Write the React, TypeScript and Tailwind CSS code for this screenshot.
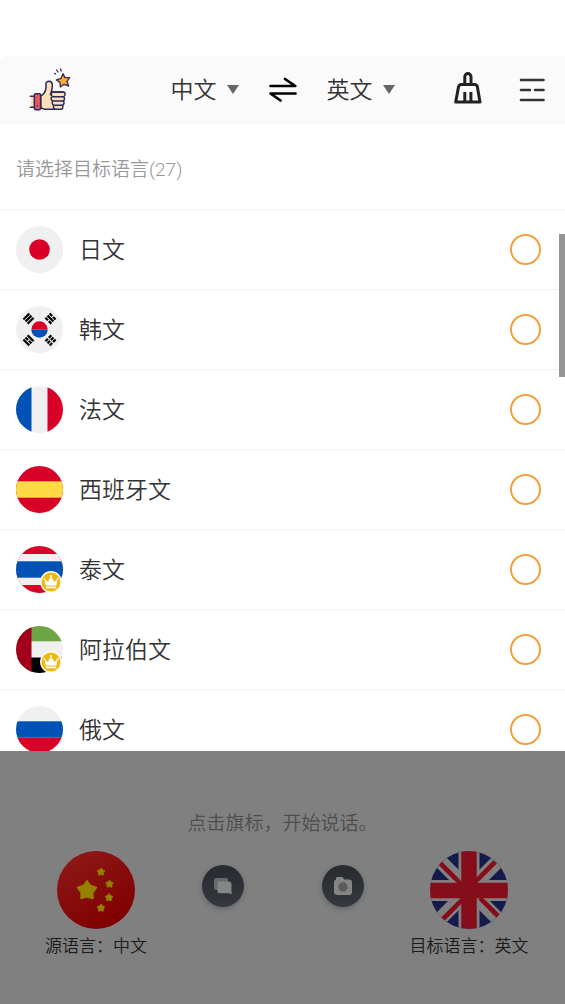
import React, { useState } from 'react';

interface Language {
  id: string;
  name: string;
  vip?: boolean;
  flag: React.ReactNode;
}

const languages: Language[] = [
  {
    id: 'ja',
    name: '日文',
    flag: (
      <>
        <rect width="47" height="47" fill="#f0f0f0" />
        <circle cx="23.5" cy="23.5" r="10.3" fill="#d80027" />
      </>
    ),
  },
  {
    id: 'ko',
    name: '韩文',
    flag: (
      <>
        <rect width="47" height="47" fill="#f0f0f0" />
        <path d="M15.3 23.5a8.2 8.2 0 0 1 16.4 0z" fill="#d80027" />
        <path d="M15.3 23.5a8.2 8.2 0 0 0 16.4 0z" fill="#0052b4" />
        <g stroke="#000" strokeWidth="2.2">
          <path d="M-4.2-3h8.4M-4.2 0h8.4M-4.2 3h8.4" transform="translate(12.5 12.6) rotate(-45)" />
          <path d="M-4.2-3h3.6M.6-3h3.6M-4.2 0h8.4M-4.2 3h3.6M.6 3h3.6" transform="translate(34.5 12.6) rotate(45)" />
          <path d="M-4.2-3h8.4M-4.2 0h3.6M.6 0h3.6M-4.2 3h8.4" transform="translate(12.5 34.4) rotate(45)" />
          <path d="M-4.2-3h3.6M.6-3h3.6M-4.2 0h3.6M.6 0h3.6M-4.2 3h3.6M.6 3h3.6" transform="translate(34.5 34.4) rotate(-45)" />
        </g>
      </>
    ),
  },
  {
    id: 'fr',
    name: '法文',
    flag: (
      <>
        <rect width="47" height="47" fill="#f0f0f0" />
        <rect width="15.5" height="47" fill="#0052b4" />
        <rect x="31.5" width="15.5" height="47" fill="#d80027" />
      </>
    ),
  },
  {
    id: 'es',
    name: '西班牙文',
    flag: (
      <>
        <rect width="47" height="47" fill="#d80027" />
        <rect y="15.3" width="47" height="16.4" fill="#ffda44" />
      </>
    ),
  },
  {
    id: 'th',
    name: '泰文',
    vip: true,
    flag: (
      <>
        <rect width="47" height="47" fill="#d80027" />
        <rect y="8" width="47" height="31" fill="#f0f0f0" />
        <rect y="15.3" width="47" height="16.4" fill="#0052b4" />
      </>
    ),
  },
  {
    id: 'ar',
    name: '阿拉伯文',
    vip: true,
    flag: (
      <>
        <rect width="47" height="47" fill="#f0f0f0" />
        <rect width="47" height="15.3" fill="#6da544" />
        <rect y="31.5" width="47" height="15.5" fill="#000" />
        <rect width="15.5" height="47" fill="#a2001d" />
      </>
    ),
  },
  {
    id: 'ru',
    name: '俄文',
    flag: (
      <>
        <rect width="47" height="47" fill="#f0f0f0" />
        <rect y="15.3" width="47" height="16.4" fill="#0052b4" />
        <rect y="31.7" width="47" height="15.3" fill="#d80027" />
      </>
    ),
  },
];

const CrownBadge = () => (
  <svg viewBox="0 0 22 22" className="absolute right-px bottom-0 h-[22px] w-[22px]" aria-hidden="true">
    <circle cx="11" cy="11" r="10.2" fill="#efb810" stroke="#fffbea" strokeWidth="1.5" />
    <path d="M4.4 8.2l3.4 2.6L11 5.4l3.2 5.4 3.4-2.6-1.3 6.3H5.7z" fill="#fff" />
    <path d="M5.7 16.4h10.6" stroke="#fff" strokeWidth="1.8" />
    <circle cx="11" cy="5.2" r="1.1" fill="#fff" />
    <circle cx="4.3" cy="8" r="1" fill="#fff" />
    <circle cx="17.7" cy="8" r="1" fill="#fff" />
  </svg>
);

const ThumbLogo = () => (
  <svg viewBox="0 0 180 180" className="h-[60px] w-[60px]" strokeLinejoin="round" strokeLinecap="round" aria-hidden="true">
    <path d="M33 109h12v33H33z" fill="#fddcb5" />
    <path d="M31 109h12M31 142h12" stroke="#2b2a5c" strokeWidth="4.5" />
    <path
      d="M62 108c8-4 15-14 16-26V70c0-8 18-9 19 3 1 9-2 17-3 23h36c7 0 7 13 0 14 5 1 5 12-1 13 5 1 4 12-2 13 3 2 2 11-4 12H78c-6 0-9-3-16-4z"
      fill="#fddfba"
      stroke="#2b2a5c"
      strokeWidth="4.5"
    />
    <path d="M130 96H99c-7 0-7 13 0 14h31M96 110c-4 3-4 11 3 13h30M99 123c-4 3-3 11 3 13h25M102 136c-3 3-2 10 3 12M94 96l-3 8" fill="none" stroke="#2b2a5c" strokeWidth="4.5" />
    <rect x="43" y="101" width="19" height="48" rx="4" fill="#e8575d" stroke="#2b2a5c" strokeWidth="4.5" />
    <circle cx="52" cy="138" r="2" fill="#2b2a5c" />
    <path d="M129 41l6 12 14 0-8 11 5 14-14-5-11 8-1-14-11-7 14-5z" fill="#f9a83a" stroke="#3a3050" strokeWidth="4" />
    <path d="M104 40l3 2M110 30l4 6M122 27l1 6" fill="none" stroke="#2b2a5c" strokeWidth="4" />
  </svg>
);

interface HeaderSelectProps {
  label: string;
  value: string;
}

const HeaderSelect = ({ label, value }: HeaderSelectProps) => (
  <div className="relative w-[68px]">
    <select
      aria-label={label}
      defaultValue={value}
      className="block w-full appearance-none bg-transparent pt-0.5 text-[23px] leading-8 font-[350] text-[#333]"
    >
      <option>{value}</option>
    </select>
    <svg viewBox="0 0 12 9" className="pointer-events-none absolute top-3 right-0 h-[9px] w-3" aria-hidden="true">
      <path d="M0 0h12L6 9z" fill="#666" />
    </svg>
  </div>
);

const Header = () => (
  <header className="grid h-17 shrink-0 grid-cols-[1fr_auto_1fr] items-center rounded-tl-lg bg-[#fafafa] px-5">
    <a href="#" aria-label="好评" className="justify-self-start">
      <ThumbLogo />
    </a>
    <div className="flex items-center gap-[30px]">
      <HeaderSelect label="源语言" value="中文" />
      <button type="button" aria-label="互换语言">
        <svg viewBox="0 0 28 28" className="h-7 w-7" fill="none" stroke="#000" strokeWidth="2.7" strokeLinecap="round" strokeLinejoin="round">
          <path d="M1.5 10H26.3L16 3M26.5 17.5H1.5L11.5 24.5" />
        </svg>
      </button>
      <HeaderSelect label="目标语言" value="英文" />
    </div>
    <div className="flex items-center gap-9 justify-self-end">
      <button type="button" aria-label="清空">
        <svg viewBox="0 0 32 36" className="h-9 w-8" fill="none" stroke="#222" strokeWidth="3" strokeLinejoin="round">
          <path d="M13.8 12.5V4.7a3.1 3.1 0 0 1 6.2 0v7.8" />
          <path d="M10.5 12.5h13c2 0 2.6 1 2.9 2.5L29 30H4.7L7.5 15c.3-1.5 1-2.5 3-2.5z" />
          <path d="M13.8 20v10M19.9 20v10" />
        </svg>
      </button>
      <button type="button" aria-label="菜单">
        <svg viewBox="0 0 26 26" className="h-[26px] w-[26px]" stroke="#333" strokeWidth="2.6" strokeLinecap="round">
          <path d="M2 3h22.5M2 13h9M16 13h8.5M2 23h22.5" />
        </svg>
      </button>
    </div>
  </header>
);

const LanguageRow = ({ language, checked, onSelect }: { language: Language; checked: boolean; onSelect: () => void }) => (
  <li className="h-20 border-t border-[#f2f2f2]">
    <label className="flex h-full items-center gap-4 pr-6 pl-4">
      <span className="relative">
        <svg viewBox="0 0 47 47" className="h-[47px] w-[47px] rounded-full" aria-hidden="true">
          {language.flag}
        </svg>
        {language.vip && <CrownBadge />}
      </span>
      <span className="flex-1 pt-[3px] text-[23px] leading-8 font-[350] text-[#333]">{language.name}</span>
      <input
        type="radio"
        name="target"
        checked={checked}
        onChange={onSelect}
        className="h-[31px] w-[31px] appearance-none rounded-full border-2 border-[#f0a040] checked:border-8"
      />
    </label>
  </li>
);

const starPoints = '0,-9.5 3.6,-4.8 9.2,-2.9 5.7,1.9 5.8,7.8 0,6.2 -5.8,7.8 -5.7,1.9 -9.2,-2.9 -3.6,-4.8';

const ChinaFlag = () => (
  <svg viewBox="0 0 78 78" className="h-[78px] w-[78px] rounded-full" aria-hidden="true">
    <defs>
      <linearGradient id="cn" x1="0" y1="0" x2="0.6" y2="1">
        <stop offset="0" stopColor="#8e1c19" />
        <stop offset="1" stopColor="#800000" />
      </linearGradient>
    </defs>
    <rect width="78" height="78" fill="url(#cn)" />
    <g fill="#958100" stroke="#958100" strokeWidth="1.8" strokeLinejoin="round">
      <polygon points={starPoints} transform="translate(30 39.5)" />
      <polygon points={starPoints} transform="translate(44 21) scale(.42)" />
      <polygon points={starPoints} transform="translate(52.5 33) scale(.42)" />
      <polygon points={starPoints} transform="translate(52 46.5) scale(.42)" />
      <polygon points={starPoints} transform="translate(44 57) scale(.42)" />
    </g>
  </svg>
);

const BritainFlag = () => (
  <svg viewBox="0 0 78 78" className="h-[78px] w-[78px] rounded-full" aria-hidden="true">
    <rect width="78" height="78" fill="#141b4b" />
    <path d="M0 0l78 78M78 0L0 78" stroke="#808080" strokeWidth="14" />
    <path d="M10 12l25 25M65 11L41 35M13 68l24-24M68 65L44 41" stroke="#860d1a" strokeWidth="4.5" />
    <path d="M39 0v78M0 39.5h78" stroke="#808080" strokeWidth="21" />
    <path d="M10 12l22 22M65 11L44 32M13 68l20-20M68 65L50 47" stroke="#860d1a" strokeWidth="4.5" />
    <path d="M39 0v78M0 39.5h78" stroke="#860d1a" strokeWidth="15.5" />
  </svg>
);

const roundButton =
  'flex h-[42px] w-[42px] items-center justify-center rounded-full bg-linear-to-b from-[#272a2e] to-[#35393e] shadow-[0_2px_5px_rgba(50,60,75,0.4)]';

const SpeakPanel = () => (
  <footer className="shrink-0 bg-[#808080] px-9 pt-[59px] pb-[46px]">
    <p className="text-center text-[19px] leading-7 font-[350] text-[#4d4d4d]">点击旗标，开始说话。</p>
    <div className="mt-[13px] flex items-start justify-between">
      <button type="button" className="flex w-[120px] flex-col items-center gap-[5px]">
        <ChinaFlag />
        <span className="text-[17px] leading-6 font-[350] whitespace-nowrap text-[#1a1a1a]">源语言：中文</span>
      </button>
      <div className="mt-[14px] flex gap-[78px]">
        <button type="button" aria-label="文本翻译" className={roundButton}>
          <svg viewBox="0 0 20 18" className="h-[18px] w-5">
            <rect x="1" y="1" width="14" height="12" rx="2" fill="#686a6d" />
            <path d="M6 4.5h10c1.5 0 2.5 1 2.5 2.5v10.5l-2.5-1.3H6.2c-1 0-1.7-.7-1.7-1.7V6c0-.9.6-1.5 1.5-1.5z" fill="#858585" />
          </svg>
        </button>
        <button type="button" aria-label="拍照翻译" className={roundButton}>
          <svg viewBox="0 0 20 20" className="h-5 w-5">
            <path d="M3 3.5V2.5Q3 1 4.5 1H9q1.5 0 2 2.500H16q3 0 3 3V16q0 3-3 3H4q-3 0-3-3V6.5q0-2.500 2-3z" fill="#858585" />
            <circle cx="10" cy="11" r="4.7" fill="#595b5e" />
          </svg>
        </button>
      </div>
      <button type="button" className="flex w-[120px] flex-col items-center gap-[5px]">
        <BritainFlag />
        <span className="text-[17px] leading-6 font-[350] whitespace-nowrap text-[#1a1a1a]">目标语言：英文</span>
      </button>
    </div>
  </footer>
);

const App = () => {
  const [selected, setSelected] = useState('');

  return (
    <div className="flex h-screen flex-col bg-white pt-14 font-['Roboto','Noto_Sans_CJK_SC',sans-serif]">
      <Header />
      <main className="relative flex min-h-0 flex-1 flex-col">
        <h1 className="shrink-0 px-4 pt-8 pb-[25px] text-[19px] leading-7 font-[350] text-[#999]">请选择目标语言(27)</h1>
        <ul className="min-h-0 flex-1 overflow-y-auto [scrollbar-width:none]">
          {languages.map((language) => (
            <LanguageRow
              key={language.id}
              language={language}
              checked={selected === language.id}
              onSelect={() => setSelected(language.id)}
            />
          ))}
        </ul>
        <div className="absolute top-[110px] right-0 h-[143px] w-1.5 bg-[#959595]" />
      </main>
      <SpeakPanel />
    </div>
  );
};

export default App;
